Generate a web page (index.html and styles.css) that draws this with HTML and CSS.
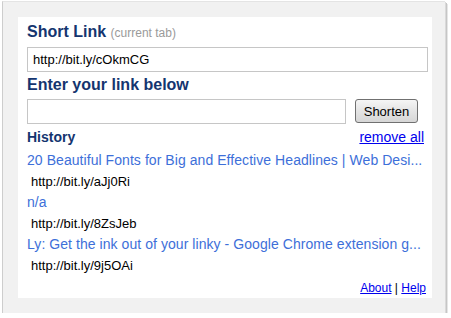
FILE: index.html
```html
<!DOCTYPE html>
<html>
<head>
<meta charset="utf-8">
<link rel="stylesheet" href="styles.css">
</head>
<body>
<div class="frame">
  <div class="panel">
    <div class="heading">Short Link <span class="sub">(current tab)</span></div>
    <input class="field field-full" type="text" value="http://bit.ly/cOkmCG">
    <div class="heading heading-2">Enter your link below</div>
    <div class="shorten-row">
      <input class="field field-short" type="text" value="">
      <button class="btn">Shorten</button>
    </div>
    <div class="history-head">
      <span class="history-title">History</span>
      <a class="link" href="#">remove all</a>
    </div>
    <div class="history">
      <div class="item-title">20 Beautiful Fonts for Big and Effective Headlines | Web Desi...</div>
      <div class="item-url">http://bit.ly/aJj0Ri</div>
      <div class="item-title">n/a</div>
      <div class="item-url">http://bit.ly/8ZsJeb</div>
      <div class="item-title">Ly: Get the ink out of your linky - Google Chrome extension g...</div>
      <div class="item-url">http://bit.ly/9j5OAi</div>
    </div>
    <div class="footer"><a class="link" href="#">About</a> | <a class="link" href="#">Help</a></div>
  </div>
</div>
</body>
</html>
```

FILE: styles.css
```css
html, body {
  margin: 0;
  padding: 0;
  background: #fff;
}
body {
  font-family: "Liberation Sans", Arial, sans-serif;
}
.frame {
  margin: 1px 0 0 2px;
  width: 443px;
  height: 312px;
  box-sizing: border-box;
  background: #f1f1f1;
  border-left: 1px solid #cdcdcd;
  border-top: 1px solid #e4e4e4;
  box-shadow: 1px 1px 0 #dadada, 2px 2px 0 #c6c6c6, 3px 3px 0 #e6e6e6;
  padding: 15px 0 0 15px;
}
.panel {
  width: 414px;
  height: 281px;
  box-sizing: border-box;
  background: #fff;
  padding: 5px 4px 3px 9px;
  display: flex;
  flex-direction: column;
}
.heading {
  font-size: 16px;
  font-weight: bold;
  line-height: 19px;
  color: #14356f;
}
.heading-2 {
  margin-top: 3px;
}
.sub {
  font-size: 12px;
  font-weight: normal;
  color: #9a9a9a;
}
.field {
  box-sizing: border-box;
  height: 25px;
  border: 1px solid #c6c6c6;
  padding: 0 5px;
  margin: 0;
  font-family: "Liberation Sans", Arial, sans-serif;
  font-size: 13px;
  color: #000;
  background: #fff;
  outline: none;
}
.field-full {
  margin-top: 4px;
  width: 401px;
}
.shorten-row {
  margin-top: 5px;
  display: flex;
  gap: 9px;
  align-items: flex-start;
}
.field-short {
  width: 319px;
}
.btn {
  box-sizing: border-box;
  width: 63px;
  height: 24px;
  margin: 0;
  padding: 0;
  border: 1px solid #707070;
  border-radius: 3px;
  background: linear-gradient(#f5f5f5, #e4e4e4 50%, #d6d6d6);
  font-family: "Liberation Sans", Arial, sans-serif;
  font-size: 13px;
  color: #000;
}
.history-head {
  margin-top: 5px;
  display: flex;
  justify-content: space-between;
  align-items: baseline;
  line-height: 16px;
  padding-right: 4px;
}
.history-title {
  font-size: 14px;
  font-weight: bold;
  color: #14356f;
}
.link {
  color: #0000ee;
  text-decoration: underline;
}
.history-head .link {
  font-size: 14px;
}
.history {
  margin-top: 5px;
}
.item-title {
  font-size: 14px;
  line-height: 21px;
  letter-spacing: 0.06px;
  color: #3d6fd9;
  white-space: nowrap;
  overflow: hidden;
}
.item-url {
  font-size: 13px;
  line-height: 21px;
  color: #000;
  padding-left: 4px;
}
.footer {
  margin-top: auto;
  text-align: right;
  font-size: 12px;
  line-height: 14px;
  padding-right: 2px;
  color: #000;
}
```
